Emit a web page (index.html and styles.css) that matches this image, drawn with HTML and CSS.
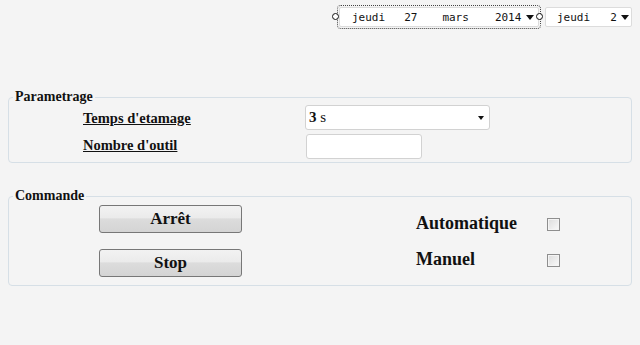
FILE: index.html
```html
<!DOCTYPE html>
<html lang="fr">
	<head>
		<meta charset="UTF-8" />
		<title>Etamage</title>
		<link rel="stylesheet" href="styles.css">
	</head>
	<body>
		<div class="datebar">
			<div class="picker focused">
				<span class="handle left"></span>
				<span class="field day">jeudi</span>
				<span class="field num">27</span>
				<span class="field month">mars</span>
				<span class="field year">2014</span>
				<span class="arrow"></span>
				<span class="handle right"></span>
			</div>
			<div class="picker short">
				<span class="field day">jeudi</span>
				<span class="field num">2</span>
				<span class="arrow"></span>
			</div>
		</div>

		<fieldset class="group params">
			<legend>Parametrage</legend>
			<div class="form-grid">
				<span class="label">Temps d'etamage</span>
				<div class="select"><span><b>3</b> s</span><span class="arrow"></span></div>
				<span class="label">Nombre d'outil</span>
				<div class="input"></div>
			</div>
		</fieldset>

		<fieldset class="group command">
			<legend>Commande</legend>
			<div class="command-row">
				<div class="buttons">
					<button class="btn">Arrêt</button>
					<button class="btn">Stop</button>
				</div>
				<div class="modes">
					<span class="mode">Automatique</span>
					<span class="check"></span>
					<span class="mode">Manuel</span>
					<span class="check"></span>
				</div>
			</div>
		</fieldset>
	</body>
</html>
```

FILE: styles.css
```css
body {
	margin: 0;
	background: #f4f4f4;
	font-family: "Liberation Serif", serif;
	color: #111;
}
.datebar {
	display: flex;
	justify-content: flex-end;
	gap: 6px;
	padding: 7px 8px 0 0;
	height: 20px;
}
.picker {
	position: relative;
	display: flex;
	align-items: center;
	box-sizing: border-box;
	height: 20px;
	background: #fff;
	border: 1px solid #dcdcdc;
	border-radius: 2px;
	font-family: "DejaVu Sans Mono", monospace;
	font-size: 11px;
	color: #111;
	padding-left: 12px;
}
.picker.focused {
	width: 200px;
	outline: 1px dotted #444;
	outline-offset: 1px;
}
.picker.short {
	width: 87px;
	padding-left: 11px;
}
.field.num { margin-left: 19px; }
.field.month { margin-left: 25px; }
.field.year { margin-left: 26px; }
.picker.short .field.num { margin-left: 20px; }
.arrow {
	width: 0;
	height: 0;
	margin-left: 5px;
	border-left: 4px solid transparent;
	border-right: 4px solid transparent;
	border-top: 5px solid #111;
}
.picker.short .arrow { margin-left: 4px; }
.handle {
	position: absolute;
	top: 5px;
	width: 5px;
	height: 5px;
	border: 1px solid #111;
	border-radius: 50%;
	background: #fff;
}
.handle.left { left: -8px; }
.handle.right { right: -5px; }
.group {
	margin: 0 8px;
	padding: 0;
	border: 1px solid #d6dfe6;
	border-radius: 4px;
}
.group legend {
	margin-left: 4px;
	padding: 0 2px;
	font-weight: bold;
	font-size: 14px;
}
.params {
	margin-top: 62px;
	padding-bottom: 3px;
}
.form-grid {
	display: grid;
	grid-template-columns: 222px 185px;
	row-gap: 4px;
	padding: 0 0 0 74px;
	align-items: center;
}
.label {
	font-weight: bold;
	font-size: 14.5px;
	text-decoration: underline;
}
.label:first-child { padding-top: 2px; }
.label:nth-child(3) { padding-bottom: 3px; }
.select {
	display: flex;
	justify-content: space-between;
	align-items: center;
	box-sizing: border-box;
	height: 25px;
	padding: 0 5px 0 3px;
	background: #fff;
	border: 1px solid #d2d2d2;
	border-radius: 3px;
	font-size: 15px;
}
.select .arrow {
	border-left-width: 3px;
	border-right-width: 3px;
	border-top-width: 4px;
}
.input {
	box-sizing: border-box;
	width: 116px;
	height: 25px;
	margin-left: 1px;
	background: #fff;
	border: 1px solid #d2d2d2;
	border-radius: 3px;
}
.command {
	margin-top: 25px;
	padding-bottom: 8px;
}
.command-row {
	display: flex;
	padding: 0 0 0 90px;
}
.buttons {
	display: flex;
	flex-direction: column;
	gap: 16px;
	padding-top: 1px;
}
.btn {
	width: 143px;
	height: 28px;
	padding: 0;
	border: 1px solid #777;
	border-radius: 3px;
	background: linear-gradient(#f2f2f2 0%, #ebebeb 45%, #dcdcdc 50%, #d4d4d4 100%);
	font-family: "Liberation Serif", serif;
	font-weight: bold;
	font-size: 17px;
	color: #111;
}
.modes {
	display: grid;
	grid-template-columns: 131px 13px;
	grid-auto-rows: 36px;
	align-items: center;
	margin-left: 174px;
	padding-top: 1px;
}
.mode {
	font-weight: bold;
	font-size: 18px;
}
.check {
	box-sizing: border-box;
	width: 13px;
	height: 13px;
	margin-top: 3px;
	border: 1px solid #8e8e8e;
	background: linear-gradient(135deg, #dcdcdc, #fafafa);
	box-shadow: inset 0 0 0 1px #f4f4f4;
}
```
